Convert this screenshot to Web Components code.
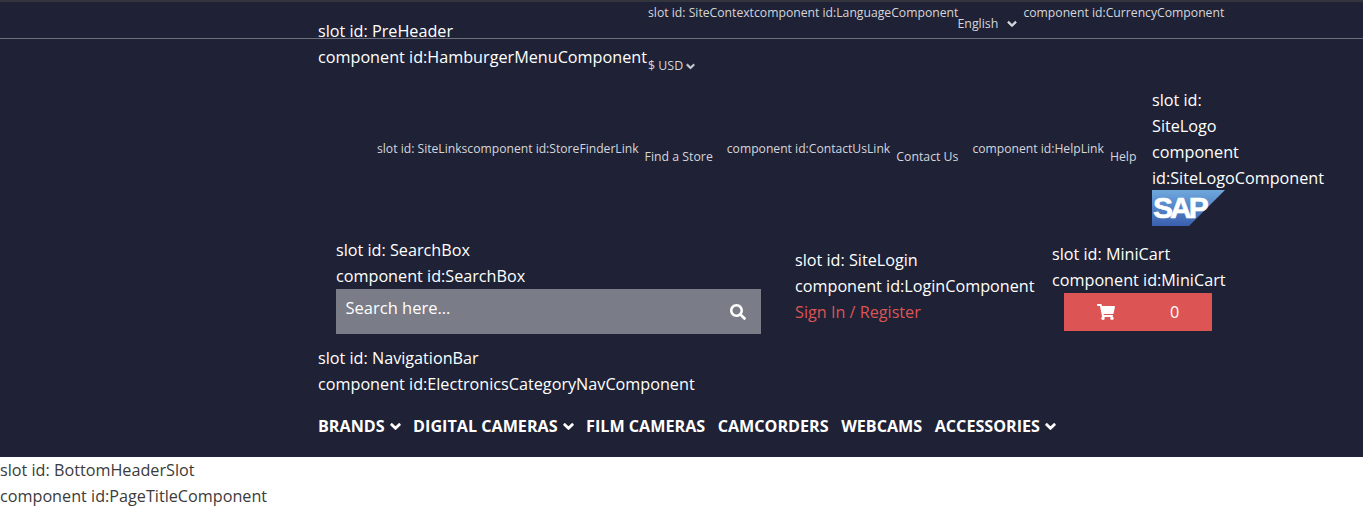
<!DOCTYPE html>
<html lang="en">
<head>
<meta charset="utf-8">
<title>Storefront</title>
<style>
    html, body { margin: 0; background: #fff; }
    body { font-family: "Open Sans", sans-serif; font-size: 16.2px; line-height: 26px; color: #3b3b3b; }
</style>
</head>
<body>

<site-header>
    <top-bar>
        <pre-header>
            <div>slot id: PreHeader</div>
            <div>component id:HamburgerMenuComponent</div>
        </pre-header>
        <site-context></site-context>
    </top-bar>
    <links-row></links-row>
    <search-row></search-row>
    <category-nav></category-nav>
</site-header>

<page-title>
    <div>slot id: BottomHeaderSlot</div>
    <div>component id:PageTitleComponent</div>
</page-title>

<script>
const CHEVRON = 'M207.029 381.476L12.686 187.132c-9.373-9.373-9.373-24.569 0-33.941l22.667-22.667c9.357-9.357 24.522-9.375 33.901-.04L224 284.505l154.745-154.021c9.379-9.335 24.544-9.317 33.901.04l22.667 22.667c9.373 9.373 9.373 24.569 0 33.941L240.971 381.476c-9.373 9.372-24.569 9.372-33.942 0z';
const chevron = (size) => `<svg width="${size}" height="${size}" viewBox="0 0 448 512" fill="currentColor" stroke="currentColor" stroke-width="50" aria-hidden="true"><path d="${CHEVRON}"/></svg>`;

function define(name, html) {
    const template = document.createElement('template');
    template.innerHTML = html;
    customElements.define(name, class extends HTMLElement {
        constructor() {
            super();
            this.attachShadow({mode: 'open'});
            this.shadowRoot.appendChild(template.content.cloneNode(true));
        }
    });
}

define('site-header', `
    <style>
        :host {
            display: block;
            height: 457px;
            background: repeating-conic-gradient(#1d1f33 0 25%, #212438 0 50%) 0 0 / 2px 2px;
            border-top: 2px solid #33343c;
            box-sizing: border-box;
            color: #fff;
        }
    </style>
    <slot></slot>
`);

define('top-bar', `
    <style>
        :host {
            display: flex;
            height: 37px;
            box-sizing: border-box;
            padding-left: 318px;
            border-bottom: 1px solid #6d6e7e;
        }
    </style>
    <slot></slot>
`);

define('pre-header', `
    <style>
        :host { display: block; flex: none; width: 330px; padding-top: 16px; }
    </style>
    <slot></slot>
`);

define('site-context', `
    <style>
        :host {
            display: block;
            width: 590px;
            margin-top: -1px;
            font-size: 12.2px;
            line-height: 24px;
            color: #d5d6dc;
        }
        .line { display: flex; white-space: nowrap; }
        .lang { margin: 11px 0 0 -1px; width: 66px; display: flex; align-items: center; font-size: 12.4px; }
        .lang svg { margin-left: 9px; }
        .usd { display: flex; align-items: center; margin-top: 18px; font-size: 12.4px; }
        .usd svg { margin-left: 3px; }
    </style>
    <div class="line">
        <span>slot id: SiteContextcomponent id:LanguageComponent</span>
        <span class="lang">English ${chevron(10)}</span>
        <span>component id:CurrencyComponent</span>
    </div>
    <div class="usd">$ USD ${chevron(9)}</div>
`);

define('links-row', `
    <style>
        :host {
            display: flex;
            align-items: center;
            margin-top: 48px;
            padding-left: 377px;
            height: 139px;
        }
        .links {
            flex: none;
            width: 775px;
            display: flex;
            align-items: center;
            font-size: 12.15px;
            color: #d5d6dc;
            white-space: nowrap;
        }
        .label { margin-bottom: 16px; }
        .link { font-size: 12.3px; margin-left: 6px; }
        .logo { flex: none; width: 185px; color: #fff; font-size: 16.2px; }
        svg { display: block; margin-top: -1px; }
        text { font-family: "Liberation Sans", sans-serif; font-weight: 700; font-size: 30px; letter-spacing: -3px; }
    </style>
    <div class="links">
        <span class="label">slot id: SiteLinkscomponent id:StoreFinderLink</span>
        <span class="link">Find a Store</span>
        <span class="label" style="margin-left:14px">component id:ContactUsLink</span>
        <span class="link">Contact Us</span>
        <span class="label" style="margin-left:14px">component id:HelpLink</span>
        <span class="link">Help</span>
    </div>
    <div class="logo">
        slot id:<br>SiteLogo<br>component<br>id:SiteLogoComponent
        <svg width="73" height="36" viewBox="0 0 73 36" role="img" aria-label="SAP">
            <defs>
                <linearGradient id="sap" x1="0" y1="0" x2="0" y2="1">
                    <stop offset="0" stop-color="#6fa8dd"/>
                    <stop offset="1" stop-color="#3a5fae"/>
                </linearGradient>
            </defs>
            <polygon points="0,0 73,0 37,36 0,36" fill="url(#sap)"/>
            <text x="1" y="28" fill="#fff" stroke="#fff" stroke-width=".6">SAP</text>
        </svg>
    </div>
`);

define('search-row', `
    <style>
        :host {
            display: flex;
            align-items: flex-start;
            margin-top: 11px;
            height: 108px;
            padding-left: 336px;
        }
        .search { flex: none; width: 425px; }
        .box {
            display: flex;
            align-items: center;
            justify-content: space-between;
            height: 45px;
            box-sizing: border-box;
            padding: 0 15px 7px 9.5px;
            background: #7a7c88;
            font-size: 16.5px;
        }
        .box svg { margin-top: 7px; }
        .login { flex: none; width: 257px; margin: 10px 0 0 34px; }
        .login a { color: #dc5454; text-decoration: none; display: block; }
        .cart { flex: none; margin-top: 4px; }
        .btn {
            display: flex;
            align-items: center;
            width: 148px;
            height: 38px;
            margin-left: 12px;
            background: #dc5454;
        }
        .btn svg { margin-left: 33px; }
        .btn span { margin-left: 55px; }
    </style>
    <div class="search">
        <div>slot id: SearchBox</div>
        <div>component id:SearchBox</div>
        <div class="box">
            <span>Search here...</span>
            <svg width="16" height="16" viewBox="0 0 512 512" fill="#fff" aria-hidden="true"><path d="M505 442.7L405.3 343c-4.5-4.5-10.6-7-17-7H372c27.6-35.3 44-79.7 44-128C416 93.1 322.9 0 208 0S0 93.1 0 208s93.1 208 208 208c48.3 0 92.7-16.4 128-44v16.3c0 6.4 2.5 12.5 7 17l99.7 99.7c9.4 9.4 24.6 9.4 33.9 0l28.3-28.3c9.4-9.4 9.4-24.6.1-34zM208 336c-70.7 0-128-57.2-128-128 0-70.7 57.2-128 128-128 70.7 0 128 57.2 128 128 0 70.7-57.2 128-128 128z"/></svg>
        </div>
    </div>
    <div class="login">
        <div>slot id: SiteLogin</div>
        <div>component id:LoginComponent</div>
        <a href="#">Sign In / Register</a>
    </div>
    <div class="cart">
        <div>slot id: MiniCart</div>
        <div>component id:MiniCart</div>
        <div class="btn">
            <svg width="18" height="16" viewBox="0 0 576 512" fill="#fff" aria-hidden="true"><path d="M528.12 301.319l47.273-208C578.806 78.301 567.391 64 551.99 64H159.208l-9.166-44.81C147.758 8.021 137.93 0 126.529 0H24C10.745 0 0 10.745 0 24v16c0 13.255 10.745 24 24 24h69.883l70.248 343.435C147.325 417.1 136 435.222 136 456c0 30.928 25.072 56 56 56s56-25.072 56-56c0-15.674-6.447-29.835-16.824-40h209.647C430.447 426.165 424 440.326 424 456c0 30.928 25.072 56 56 56s56-25.072 56-56c0-22.172-12.888-41.332-31.579-50.405l5.517-24.276c3.413-15.018-8.002-29.319-23.403-29.319H218.117l-6.545-32h293.145c11.206 0 20.92-7.754 23.403-18.681z"/></svg>
            <span>0</span>
        </div>
    </div>
`);

define('category-nav', `
    <style>
        :host { display: block; padding-left: 318px; }
        ul {
            display: flex;
            gap: 12.5px;
            margin: 16px 0 0;
            padding: 0;
            list-style: none;
            font-size: 16.15px;
            font-weight: 700;
            text-transform: uppercase;
        }
        li { display: flex; align-items: center; }
        li svg { margin-left: 5px; }
    </style>
    <div>slot id: NavigationBar</div>
    <div>component id:ElectronicsCategoryNavComponent</div>
    <ul>
        <li>Brands ${chevron(11)}</li>
        <li>Digital Cameras ${chevron(11)}</li>
        <li>Film Cameras</li>
        <li>Camcorders</li>
        <li>Webcams</li>
        <li>Accessories ${chevron(11)}</li>
    </ul>
`);

define('page-title', `
    <style>
        :host { display: block; }
    </style>
    <slot></slot>
`);
</script>
</body>
</html>
